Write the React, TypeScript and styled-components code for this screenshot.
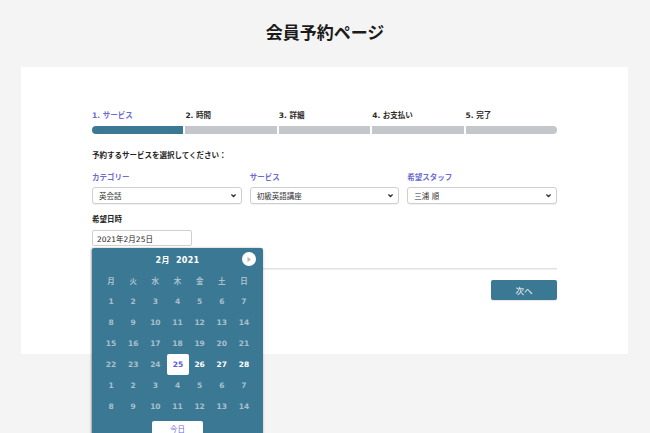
import React from "react";
import styled, { createGlobalStyle } from "styled-components";

const Global = createGlobalStyle`
  html, body { margin: 0; padding: 0; background: #f4f4f4; }
  body { font-family: "DejaVu Sans", "Noto Sans CJK JP", sans-serif; color: #222; }
  * { box-sizing: border-box; }
`;

const Page = styled.div`
  width: 650px;
  height: 433px;
  overflow: hidden;
  padding-top: 20px;
`;

const Title = styled.h1`
  margin: 0;
  height: 24px;
  line-height: 24px;
  text-align: center;
  font-family: "Noto Sans CJK JP", sans-serif;
  font-size: 17px;
  font-weight: 700;
  color: #1b1b1b;
`;

const Card = styled.div`
  margin: 23px 22px 0 21px;
  background: #fff;
  padding: 44px 71px 55px 71px;
  height: 287px;
`;

const Steps = styled.div`
  display: grid;
  grid-template-columns: repeat(5, 1fr);
  column-gap: 2px;
`;

const StepLabel = styled.div<{ $active?: boolean }>`
  font-size: 7.5px;
  font-weight: 700;
  height: 10px;
  line-height: 10px;
  color: ${(p) => (p.$active ? "#6c6ccf" : "#2a2a2a")};
`;

const Bar = styled.div`
  margin-top: 5px;
  display: grid;
  grid-template-columns: repeat(5, 1fr);
  column-gap: 2px;
  border-radius: 4px;
  overflow: hidden;
`;

const Segment = styled.div<{ $active?: boolean }>`
  height: 8px;
  background: ${(p) => (p.$active ? "#3b7894" : "#c3c7cb")};
`;

const Instruction = styled.div`
  margin-top: 17px;
  height: 10px;
  line-height: 10px;
  font-size: 7.5px;
  font-weight: 700;
  color: #222;
`;

const Fields = styled.div`
  margin-top: 12px;
  display: grid;
  grid-template-columns: repeat(3, 1fr);
  column-gap: 8px;
`;

const Field = styled.div`
  display: flex;
  flex-direction: column;
  gap: 4px;
`;

const FieldLabel = styled.div`
  height: 10px;
  line-height: 10px;
  font-size: 7.5px;
  font-weight: 700;
  color: #6c6ccf;
`;

const SelectBox = styled.div`
  height: 17px;
  border: 1px solid #cfcfcf;
  border-radius: 3px;
  box-shadow: 0 1px 1px rgba(0, 0, 0, 0.06);
  display: flex;
  align-items: center;
  justify-content: space-between;
  padding: 0 4px 0 6px;
  font-size: 7.5px;
  color: #333;
  background: #fff;
`;

const DateLabel = styled.div`
  margin-top: 11px;
  height: 10px;
  line-height: 10px;
  font-size: 7.5px;
  font-weight: 700;
  color: #222;
`;

const DateWrap = styled.div`
  position: relative;
  margin-top: 5px;
  width: 100px;
`;

const DateInput = styled.div`
  height: 16px;
  border: 1px solid #cfcfcf;
  border-radius: 2px;
  display: flex;
  align-items: center;
  padding: 0 4px;
  font-size: 7.5px;
  color: #222;
  background: #fff;
`;

const Calendar = styled.div`
  position: absolute;
  top: 18px;
  left: 0;
  width: 171px;
  background: #3b7894;
  border-radius: 2px;
  box-shadow: -1px 0 2px rgba(0, 0, 0, 0.25), 0 1px 3px rgba(0, 0, 0, 0.2);
  padding: 0 8px 6px 8px;
  z-index: 2;
`;

const CalHeader = styled.div`
  position: relative;
  height: 22px;
  display: flex;
  align-items: center;
  justify-content: center;
  color: #fff;
  font-size: 8px;
  font-weight: 700;
  letter-spacing: 0.3px;
`;

const NextBtn = styled.div`
  position: absolute;
  right: -1px;
  top: 4px;
  width: 14px;
  height: 14px;
  border-radius: 50%;
  background: #fff;
  display: flex;
  align-items: center;
  justify-content: center;
`;

const Grid = styled.div`
  display: grid;
  grid-template-columns: repeat(7, 1fr);
  grid-auto-rows: 21px;
`;

const Cell = styled.div<{ $tone: "head" | "muted" | "bright" | "selected" }>`
  display: flex;
  align-items: center;
  justify-content: center;
  font-size: 7.5px;
  font-weight: 700;
  color: ${(p) =>
    p.$tone === "bright" ? "#ffffff" : p.$tone === "selected" ? "#5b5bd0" : "#a9c0cc"};
  font-family: ${(p) =>
    p.$tone === "head" ? `"Noto Sans CJK JP", sans-serif` : `"DejaVu Sans", sans-serif`};
  background: ${(p) => (p.$tone === "selected" ? "#fff" : "transparent")};
  border-radius: ${(p) => (p.$tone === "selected" ? "2px" : "0")};
  margin: ${(p) => (p.$tone === "selected" ? "0 0 0 1px" : "0")};
`;

const TodayRow = styled.div`
  margin-top: 4px;
  display: flex;
  justify-content: center;
`;

const TodayBtn = styled.div`
  width: 51px;
  height: 17px;
  border-radius: 2px;
  background: #fff;
  color: #6c6ccf;
  font-size: 7.5px;
  display: flex;
  align-items: center;
  justify-content: center;
  padding-bottom: 3px;
`;

const Divider = styled.div`
  margin-top: 22px;
  height: 1px;
  background: #e2e2e2;
  box-shadow: 0 1px 0 #efefef;
`;

const Actions = styled.div`
  margin-top: 11px;
  display: flex;
  justify-content: flex-end;
`;

const NextButton = styled.div`
  width: 66px;
  height: 20px;
  border-radius: 2px;
  background: #3b7894;
  color: #fff;
  font-size: 8.5px;
  font-family: "Noto Sans CJK JP", sans-serif;
  display: flex;
  align-items: center;
  justify-content: center;
  box-shadow: 0 1px 1px rgba(0, 0, 0, 0.1);
`;

const Chevron = () => (
  <svg width="7" height="7" viewBox="0 0 10 10">
    <path d="M2 3.5 L5 6.5 L8 3.5" fill="none" stroke="#333" strokeWidth="1.8" />
  </svg>
);

const steps = ["1. サービス", "2. 時間", "3. 詳細", "4. お支払い", "5. 完了"];
const fields = [
  { label: "カテゴリー", value: "英会話" },
  { label: "サービス", value: "初級英語講座" },
  { label: "希望スタッフ", value: "三浦 順" },
];
const weekdays = ["月", "火", "水", "木", "金", "土", "日"];

type Tone = "muted" | "bright" | "selected";
const days: { n: number; tone: Tone }[] = [];
for (let i = 1; i <= 7; i++) days.push({ n: i, tone: "muted" });
for (let i = 8; i <= 28; i++)
  days.push({ n: i, tone: i === 25 ? "selected" : i > 25 ? "bright" : "muted" });
for (let i = 1; i <= 14; i++) days.push({ n: i, tone: "muted" });

export default function App() {
  return (
    <>
      <Global />
      <Page>
        <Title>会員予約ページ</Title>
        <Card>
          <Steps>
            {steps.map((s, i) => (
              <StepLabel key={s} $active={i === 0}>
                {s}
              </StepLabel>
            ))}
          </Steps>
          <Bar>
            {steps.map((s, i) => (
              <Segment key={s} $active={i === 0} />
            ))}
          </Bar>
          <Instruction>予約するサービスを選択してください：</Instruction>
          <Fields>
            {fields.map((f) => (
              <Field key={f.label}>
                <FieldLabel>{f.label}</FieldLabel>
                <SelectBox>
                  <span>{f.value}</span>
                  <Chevron />
                </SelectBox>
              </Field>
            ))}
          </Fields>
          <DateLabel>希望日時</DateLabel>
          <DateWrap>
            <DateInput>2021年2月25日</DateInput>
            <Calendar>
              <CalHeader>
                2月&nbsp;&nbsp;2021
                <NextBtn>
                  <svg width="6" height="7" viewBox="0 0 6 7">
                    <path d="M1.5 0.8 L5 3.5 L1.5 6.2 Z" fill="#b9b9b9" />
                  </svg>
                </NextBtn>
              </CalHeader>
              <Grid>
                {weekdays.map((w) => (
                  <Cell key={w} $tone="head">
                    {w}
                  </Cell>
                ))}
                {days.map((d, i) => (
                  <Cell key={i} $tone={d.tone}>
                    {d.n}
                  </Cell>
                ))}
              </Grid>
              <TodayRow>
                <TodayBtn>今日</TodayBtn>
              </TodayRow>
            </Calendar>
          </DateWrap>
          <Divider />
          <Actions>
            <NextButton>次へ</NextButton>
          </Actions>
        </Card>
      </Page>
    </>
  );
}
